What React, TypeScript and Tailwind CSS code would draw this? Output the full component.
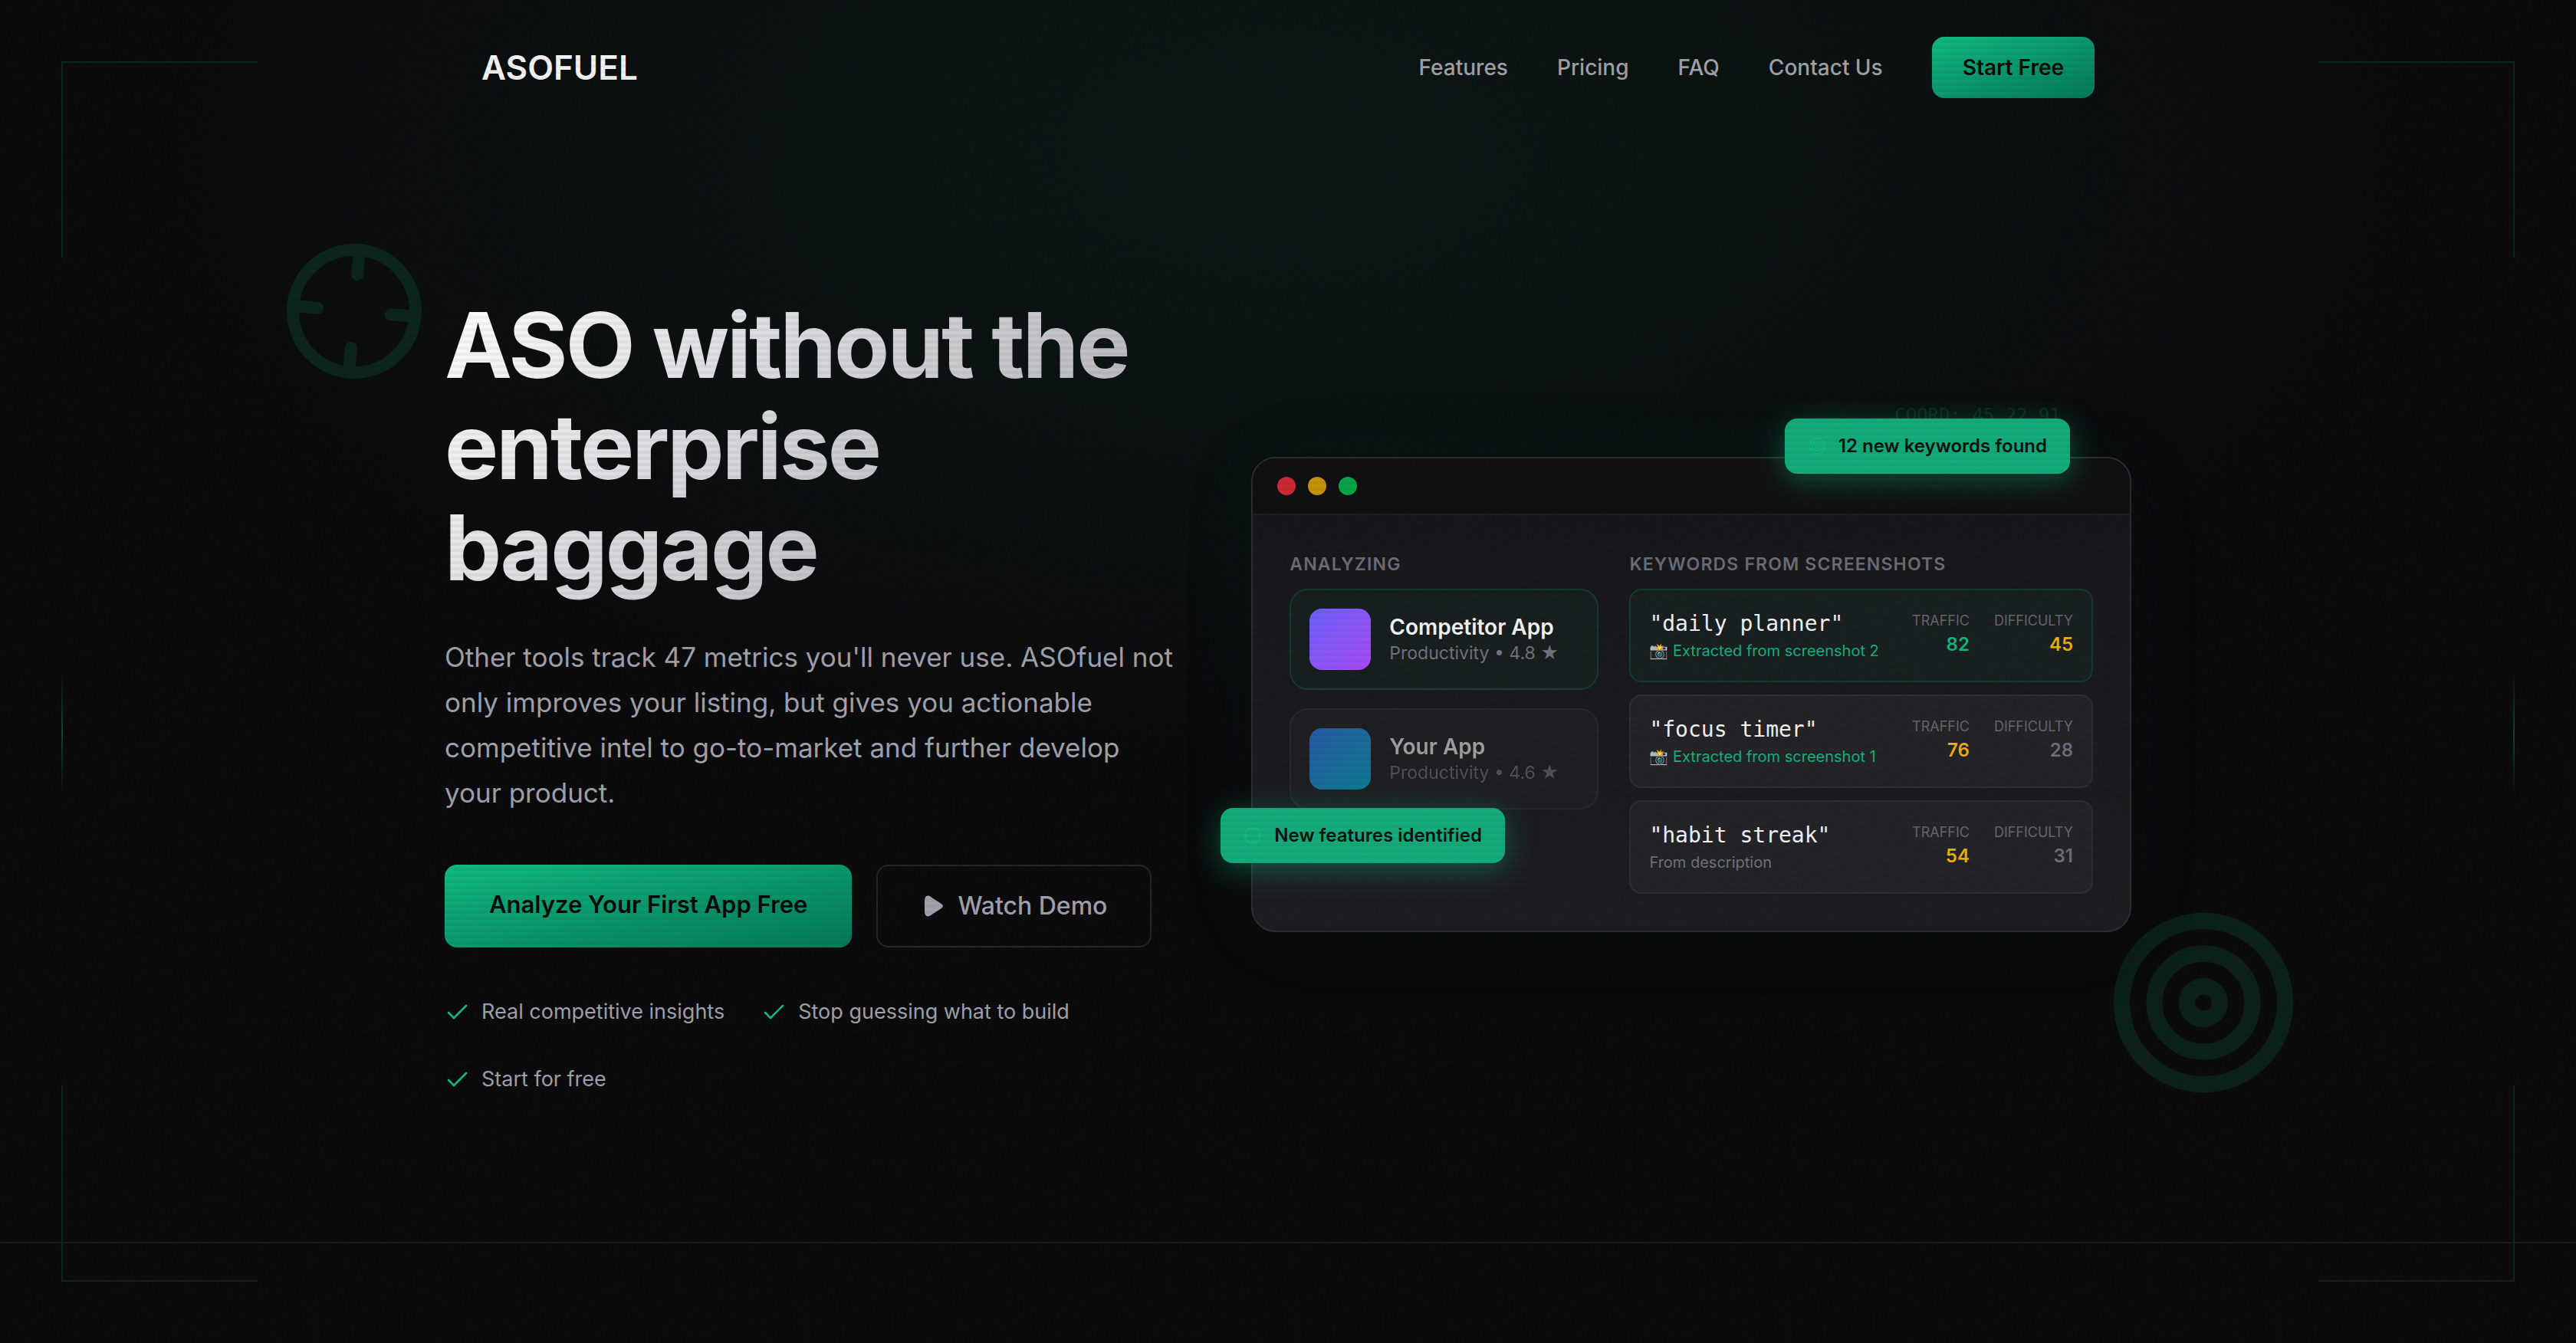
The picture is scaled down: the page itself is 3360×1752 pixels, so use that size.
import { Crosshair, Target } from "lucide-react"

const navLinks = ["Features", "Pricing", "FAQ", "Contact Us"]

const perks = ["Real competitive insights", "Stop guessing what to build", "Start for free"]

interface Keyword {
  term: string
  source: string
  fromScreenshot: boolean
  traffic: number
  trafficClass: string
  difficulty: number
  difficultyClass: string
  cardClass: string
}

const keywords: Keyword[] = [
  {
    term: "daily planner",
    source: "Extracted from screenshot 2",
    fromScreenshot: true,
    traffic: 82,
    trafficClass: "text-[#13b47f]",
    difficulty: 45,
    difficultyClass: "text-[#efaf08]",
    cardClass: "border-[#14392d] bg-[#171e1e]",
  },
  {
    term: "focus timer",
    source: "Extracted from screenshot 1",
    fromScreenshot: true,
    traffic: 76,
    trafficClass: "text-[#efaf08]",
    difficulty: 28,
    difficultyClass: "text-[#6d6d76]",
    cardClass: "border-[#2d2d31] bg-[#222226]",
  },
  {
    term: "habit streak",
    source: "From description",
    fromScreenshot: false,
    traffic: 54,
    trafficClass: "text-[#efaf08]",
    difficulty: 31,
    difficultyClass: "text-[#6d6d76]",
    cardClass: "border-[#2d2d31] bg-[#222226]",
  },
]

function Logo() {
  return (
    <a href="#" className="text-[44px] leading-[48px] font-semibold text-[#f4f4f5]">
      ASOFUEL
    </a>
  )
}

function CheckIcon() {
  return (
    <svg viewBox="0 0 32 32" className="size-8 shrink-0" fill="none" stroke="#11b880" strokeWidth="2.6" strokeLinecap="round" strokeLinejoin="round">
      <path d="M5 17l7 7L28 8" />
    </svg>
  )
}

function PlayIcon() {
  return (
    <svg viewBox="0 0 32 32" className="size-8 shrink-0" fill="currentColor">
      <path d="M5 9C5 3 9 1 13 4L26 12.500C30 15 30 17 26 19.500L13 28C9 31 5 29 5 23Z" />
    </svg>
  )
}

function Backdrop() {
  return (
    <div className="pointer-events-none absolute inset-0 bg-[radial-gradient(ellipse_1500px_800px_at_50%_200px,rgba(16,185,129,0.07),transparent)]" />
  )
}

// Corner brackets and side ticks around the viewport
function Frame() {
  return (
    <div className="pointer-events-none fixed inset-20">
      <div className="absolute top-0 left-0 size-64 border-t-2 border-l-2 border-[#0a231a]" />
      <div className="absolute top-0 right-0 size-64 border-t-2 border-r-2 border-[#0a231a]" />
      <div className="absolute bottom-0 left-0 size-64 border-b-2 border-l-2 border-[#0a231a]" />
      <div className="absolute right-0 bottom-0 size-64 border-r-2 border-b-2 border-[#0a231a]" />
      <div className="absolute top-1/2 left-0 h-40 w-0.5 bg-linear-to-b from-transparent via-[#0d4633] to-transparent" />
      <div className="absolute top-1/2 right-0 h-40 w-0.5 bg-linear-to-b from-transparent via-[#0d4633] to-transparent" />
    </div>
  )
}

// Film grain plus CRT scanlines over everything
function Texture() {
  return (
    <div className="pointer-events-none fixed inset-0 z-50">
      <svg className="absolute inset-0 size-full opacity-[0.03]">
        <filter id="grain" x="0" y="0" width="100%" height="100%">
          <feTurbulence type="fractalNoise" baseFrequency="0.4" numOctaves="3" stitchTiles="stitch" />
        </filter>
        <rect width="100%" height="100%" filter="url(#grain)" />
      </svg>
      <div className="absolute inset-0 bg-[repeating-linear-gradient(0deg,rgba(0,0,0,0.04)_0px,rgba(0,0,0,0.04)_4px,transparent_4px,transparent_8px)]" />
    </div>
  )
}

function Header() {
  return (
    <header className="relative mx-auto flex w-full max-w-[2200px] items-center justify-between p-12">
      <Logo />
      <nav className="flex items-center gap-16 text-[28px] leading-10 font-medium text-[#a1a1aa]">
        {navLinks.map((link) => (
          <a key={link} href="#">
            {link}
          </a>
        ))}
        <button className="rounded-2xl bg-linear-to-br from-[#10b981] to-[#047857] px-10 py-5 font-semibold text-[#050807]">
          Start Free
        </button>
      </nav>
    </header>
  )
}

function AppCard({ name, meta, cardClass, iconClass, bodyClass }: { name: string; meta: string; cardClass: string; iconClass: string; bodyClass: string }) {
  return (
    <div className={`rounded-3xl border-2 p-6 ${cardClass}`}>
      <div className={`flex items-center gap-6 ${bodyClass}`}>
        <div className={`size-20 shrink-0 rounded-2xl bg-linear-135 ${iconClass}`} />
        <div className="whitespace-nowrap">
          <div className="text-[28px] leading-9 font-semibold text-[#f4f4f5]">{name}</div>
          <div className="text-[23px] leading-8 text-[#71717a]">{meta}</div>
        </div>
      </div>
    </div>
  )
}

function Metric({ label, value, valueClass }: { label: string; value: number; valueClass: string }) {
  return (
    <div className="text-right">
      <div className="text-[18px] leading-8 text-[#65656e]">{label}</div>
      <div className={`text-2xl leading-[30px] font-semibold ${valueClass}`}>{value}</div>
    </div>
  )
}

function KeywordCard({ keyword }: { keyword: Keyword }) {
  return (
    <div className={`flex items-start justify-between rounded-2xl border-2 p-6 ${keyword.cardClass}`}>
      <div className="whitespace-nowrap">
        <div className="font-['DejaVu_Sans_Mono',monospace] text-[28px] leading-10 text-[#f4f4f5]">"{keyword.term}"</div>
        <div className={`text-[20px] leading-[30px] ${keyword.fromScreenshot ? "text-[#14b07d]" : "text-[#71717a]"}`}>
          {keyword.fromScreenshot && "📸 "}
          {keyword.source}
        </div>
      </div>
      <div className="flex gap-8">
        <Metric label="TRAFFIC" value={keyword.traffic} valueClass={keyword.trafficClass} />
        <Metric label="DIFFICULTY" value={keyword.difficulty} valueClass={keyword.difficultyClass} />
      </div>
    </div>
  )
}

function DemoWindow() {
  return (
    <div className="relative">
      <div className="absolute -top-[68px] right-[92px] font-['DejaVu_Sans_Mono',monospace] text-2xl leading-7 text-[#08261c]">
        COORD: 45.22.91
      </div>
      <div className="overflow-hidden rounded-[32px] border-2 border-[#2c2c30] bg-linear-to-b from-[#151518] to-[#1b1b20] shadow-[0_20px_80px_rgba(0,0,0,0.25),0_0_120px_rgba(16,185,129,0.05)]">
        <div className="flex gap-4 border-b-2 border-[#1c1c1e] bg-[#0e0e10] px-8 py-6">
          <div className="size-6 rounded-full bg-[#cd2831]" />
          <div className="size-6 rounded-full bg-[#c49208]" />
          <div className="size-6 rounded-full bg-[#06a446]" />
        </div>
        <div className="grid grid-cols-[1fr_1.5fr] gap-10 p-12">
          <div>
            <h3 className="mb-4 text-[23px] leading-8 font-semibold tracking-wider text-[#6b6b74]">ANALYZING</h3>
            <div className="flex flex-col gap-6">
              <AppCard
                name="Competitor App"
                meta="Productivity • 4.8 ★"
                cardClass="border-[#14392d] bg-[#161d1d]"
                iconClass="from-[#6560fa] to-[#a847f7]"
                bodyClass=""
              />
              <AppCard
                name="Your App"
                meta="Productivity • 4.6 ★"
                cardClass="border-[#27272a] bg-[#1d1d20]"
                iconClass="from-[#2b7fff] to-[#00b8db]"
                bodyClass="opacity-60"
              />
            </div>
          </div>
          <div>
            <h3 className="mb-4 text-[23px] leading-8 font-semibold tracking-wider text-[#6b6b74]">KEYWORDS FROM SCREENSHOTS</h3>
            <div className="flex flex-col gap-4">
              {keywords.map((keyword) => (
                <KeywordCard key={keyword.term} keyword={keyword} />
              ))}
            </div>
          </div>
        </div>
      </div>
      <div className="absolute -top-[50px] right-20 flex items-center gap-4 rounded-2xl bg-[#13ab7a] px-[30px] py-5 text-[24px] leading-8 font-semibold whitespace-nowrap text-[#04110c] shadow-[0_8px_40px_rgba(16,185,129,0.4)]">
        <Target className="size-6 text-[#10b981]" />
        12 new keywords found
      </div>
      <div className="absolute bottom-[90px] -left-10 flex items-center gap-4 rounded-2xl bg-[#13ab7a] px-[30px] py-5 text-[24px] leading-8 font-semibold whitespace-nowrap text-[#04110c] shadow-[0_8px_40px_rgba(16,185,129,0.4)]">
        <Crosshair className="size-6 text-[#10b981]" />
        New features identified
      </div>
    </div>
  )
}

function Hero() {
  return (
    <section className="relative border-b-2 border-[#19191b] pt-52 pb-48">
      <div className="relative mx-auto grid max-w-[2200px] grid-cols-[1fr_1.2fr] items-center gap-24">
        <Crosshair className="absolute -top-[74px] -left-[214px] size-48 rotate-5 text-[#0a231b]" />
        <Target className="absolute -right-[222px] -bottom-2 size-64 text-[#0a1f18]" />
        <div className="relative">
          <h1 className="bg-linear-135 from-white to-[#a1a1aa] bg-clip-text pb-4 text-[118px] leading-[132px] font-bold tracking-tight text-transparent">
            ASO without the enterprise baggage
          </h1>
          <p className="mt-8 text-[35px] leading-[59px] text-[#a1a1aa]">
            Other tools track 47 metrics you'll never use. ASOfuel not only improves your listing, but gives you actionable
            competitive intel to go-to-market and further develop your product.
          </p>
          <div className="mt-16 flex gap-8 leading-10">
            <button className="rounded-2xl bg-linear-to-br from-[#10b981] to-[#047857] px-[58px] pt-8 pb-9 text-[31px] font-semibold text-[#050807]">
              Analyze Your First App Free
            </button>
            <button className="flex items-center gap-4 rounded-2xl border-2 border-[#232326] px-14 text-[32px] font-medium text-[#a1a1aa]">
              <PlayIcon />
              Watch Demo
            </button>
          </div>
          <ul className="mt-16 flex flex-wrap gap-12 text-[27px] leading-10 text-[#a1a1aa]">
            {perks.map((perk) => (
              <li key={perk} className="flex items-center gap-4">
                <CheckIcon />
                {perk}
              </li>
            ))}
          </ul>
        </div>
        <DemoWindow />
      </div>
    </section>
  )
}

export default function App() {
  return (
    <div className="relative min-h-screen overflow-hidden bg-[#09090b] font-['Inter',sans-serif]">
      <Backdrop />
      <Header />
      <Hero />
      <Frame />
      <Texture />
    </div>
  )
}
